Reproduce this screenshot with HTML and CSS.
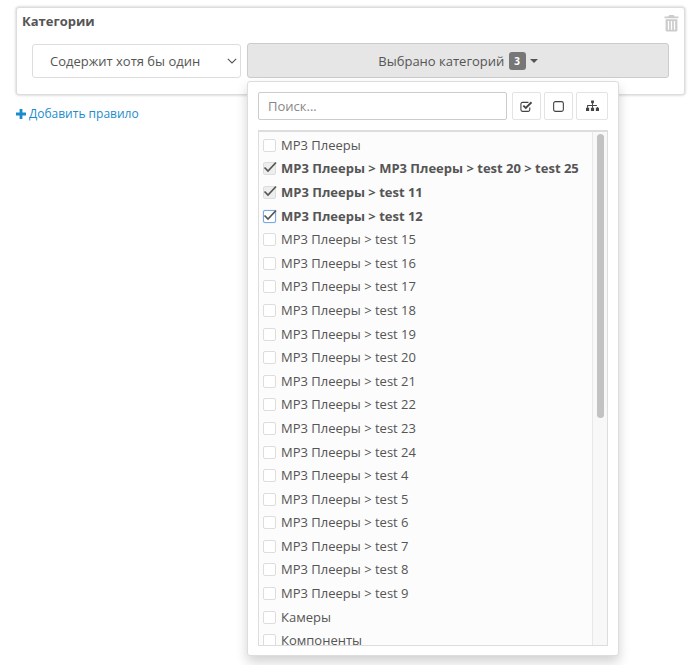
FILE: index.html
```html
<!DOCTYPE html>
<html lang="ru">
<head>
  <meta charset="UTF-8" />
  <title>Категории</title>
  <link rel="stylesheet" href="styles.css">
</head>
<body>
  <section class="rule">
    <svg class="trash" viewBox="0 0 14 16" width="15" height="18"><path d="M5 0.5h4l1 1.5h3.5v1.6H.5V2H4zM1.5 4.6h11V15a1 1 0 0 1-1 1h-9a1 1 0 0 1-1-1zM3.6 6.2v8h1.2v-8zM6.4 6.2v8h1.2v-8zM9.2 6.2v8h1.2v-8z" fill-rule="evenodd"/></svg>
    <h2 class="rule-title">Категории</h2>
    <div class="rule-controls">
      <div class="select">
        <span>Содержит хотя бы один</span>
        <svg class="select-arrow" viewBox="0 0 10 6" width="10" height="6"><path d="M.8.8 5 5l4.2-4.2" fill="none" stroke="#555" stroke-width="1.1"/></svg>
      </div>
      <div class="picker">
        <button class="picker-btn" type="button">Выбрано категорий <span class="badge">3</span><span class="caret"></span></button>
        <div class="dropdown">
          <div class="toolbar">
            <input class="search" type="text" placeholder="Поиск..." />
            <button class="tool tool-check" type="button">
              <svg viewBox="0 0 14 14" width="13" height="13"><path d="M10.5 8v2.6a1.6 1.6 0 0 1-1.6 1.6H2.6A1.6 1.6 0 0 1 1 10.6V4.2a1.6 1.6 0 0 1 1.6-1.6h6.5" fill="none" stroke="#444" stroke-width="1.2"/><path d="M3.6 6 6.2 8.5 12.4 2.4" fill="none" stroke="#444" stroke-width="2"/></svg>
            </button>
            <button class="tool tool-empty" type="button">
              <svg viewBox="0 0 12 12" width="11" height="11"><rect x=".7" y=".7" width="10.6" height="10.6" rx="2" fill="none" stroke="#444" stroke-width="1.2"/></svg>
            </button>
            <button class="tool tool-tree" type="button">
              <svg viewBox="0 0 14 12" width="13" height="12"><path d="M5.5 0h3v3h-1v2h4.2v2h1.1v1H14v3.4h-3.4V8h1.1V6H7.5v2h1.2v3.4H5.3V8h1.2V6H2.3v2h1.1v3.4H0V8h1.2V5h5.3V3h-1z" fill="#444"/></svg>
            </button>
          </div>
          <div class="list">
            <ul class="items">
              <li class="item"><span class="box"></span>МР3 Плееры</li>
              <li class="item is-checked"><span class="box"><svg viewBox="0 0 14 12" width="14" height="12"><path d="M1.5 6.5 5 10l8-8.5" fill="none" stroke="#555" stroke-width="1.7"/></svg></span>МР3 Плееры &gt; МР3 Плееры &gt; test 20 &gt; test 25</li>
              <li class="item is-checked"><span class="box"><svg viewBox="0 0 14 12" width="14" height="12"><path d="M1.5 6.5 5 10l8-8.5" fill="none" stroke="#555" stroke-width="1.7"/></svg></span>МР3 Плееры &gt; test 11</li>
              <li class="item is-checked is-focus"><span class="box"><svg viewBox="0 0 14 12" width="14" height="12"><path d="M1.5 6.5 5 10l8-8.5" fill="none" stroke="#555" stroke-width="1.7"/></svg></span>МР3 Плееры &gt; test 12</li>
              <li class="item"><span class="box"></span>МР3 Плееры &gt; test 15</li>
              <li class="item"><span class="box"></span>МР3 Плееры &gt; test 16</li>
              <li class="item"><span class="box"></span>МР3 Плееры &gt; test 17</li>
              <li class="item"><span class="box"></span>МР3 Плееры &gt; test 18</li>
              <li class="item"><span class="box"></span>МР3 Плееры &gt; test 19</li>
              <li class="item"><span class="box"></span>МР3 Плееры &gt; test 20</li>
              <li class="item"><span class="box"></span>МР3 Плееры &gt; test 21</li>
              <li class="item"><span class="box"></span>МР3 Плееры &gt; test 22</li>
              <li class="item"><span class="box"></span>МР3 Плееры &gt; test 23</li>
              <li class="item"><span class="box"></span>МР3 Плееры &gt; test 24</li>
              <li class="item"><span class="box"></span>МР3 Плееры &gt; test 4</li>
              <li class="item"><span class="box"></span>МР3 Плееры &gt; test 5</li>
              <li class="item"><span class="box"></span>МР3 Плееры &gt; test 6</li>
              <li class="item"><span class="box"></span>МР3 Плееры &gt; test 7</li>
              <li class="item"><span class="box"></span>МР3 Плееры &gt; test 8</li>
              <li class="item"><span class="box"></span>МР3 Плееры &gt; test 9</li>
              <li class="item"><span class="box"></span>Камеры</li>
              <li class="item"><span class="box"></span>Компоненты</li>
            </ul>
            <div class="scrollbar"><div class="thumb"></div></div>
          </div>
        </div>
      </div>
    </div>
  </section>

  <a class="add-rule" href="#"><svg viewBox="0 0 10 10" width="10" height="10"><path d="M3.6 0h2.8v3.6H10v2.8H6.4V10H3.6V6.4H0V3.6h3.6z" fill="#1b8ccb"/></svg>Добавить правило</a>
</body>
</html>
```

FILE: styles.css
```css
*, *::before, *::after { box-sizing: border-box; }
html, body { height: 100%; }
body {
  margin: 0;
  padding: 7px 10px 0 16px;
  overflow: hidden;
  font-family: "Open Sans", sans-serif;
  font-size: 13px;
  color: #555;
  background: #fff;
}

/* Rule card */
.rule {
  position: relative;
  height: 88px;
  padding: 5px 15px 0 5px;
  background: #fff;
  border: 1px solid #ddd;
  border-radius: 3px;
  box-shadow: 0 0 3px rgba(0,0,0,0.25);
}
.rule-title {
  margin: 0 0 13px;
  font-size: 13px;
  line-height: 17px;
  font-weight: 700;
  color: #555;
}
.trash {
  position: absolute;
  top: 6px;
  right: 5px;
  fill: #ccc;
}
.rule-controls {
  display: flex;
  align-items: flex-end;
  gap: 6px;
  padding-left: 10px;
}

/* Select */
.select {
  display: flex;
  align-items: center;
  justify-content: space-between;
  width: 209px;
  height: 34px;
  padding: 0 3px 0 17px;
  color: #555;
  border: 1px solid #ddd;
  border-radius: 3px;
}

/* Picker button and dropdown */
.picker {
  position: relative;
  flex: 1;
}
.picker-btn {
  display: block;
  width: 100%;
  height: 35px;
  padding: 0;
  font-family: inherit;
  font-size: 13px;
  color: #555;
  background: #e6e6e6;
  border: 1px solid #ccc;
  border-radius: 3px;
}
.badge {
  display: inline-block;
  width: 17px;
  height: 18px;
  margin-left: 1px;
  font-size: 10px;
  line-height: 18px;
  font-weight: 700;
  color: #fff;
  background: #777;
  border-radius: 3px;
  vertical-align: 1px;
}
.caret {
  display: inline-block;
  margin-left: 4px;
  border-top: 4px solid #555;
  border-left: 4px solid transparent;
  border-right: 4px solid transparent;
  vertical-align: 3px;
}
.dropdown {
  position: absolute;
  top: 38px;
  left: 0;
  width: 372px;
  height: 575px;
  padding: 10px 10px 0;
  background: #fff;
  border: 1px solid #ddd;
  border-radius: 3px;
  box-shadow: 0 6px 12px rgba(0,0,0,0.18);
}
.toolbar {
  display: flex;
  gap: 3px;
  height: 28px;
}
.search {
  width: 249px;
  margin-right: 2px;
  padding: 0 9px;
  font-family: inherit;
  font-size: 13px;
  color: #555;
  border: 1px solid #ccc;
  border-radius: 2px;
}
.search::placeholder { color: #888; opacity: 1; }
.tool {
  display: flex;
  align-items: center;
  justify-content: center;
  width: 29px;
  padding: 0;
  background: #fff;
  border: 1px solid #e3e3e3;
  border-radius: 2px;
}
.tool-tree { width: 32px; }

/* Category list */
.list {
  display: flex;
  height: 516px;
  margin-top: 10px;
  overflow: hidden;
  background: #fcfcfc;
  border: 1px solid #ddd;
  border-top-width: 2px;
}
.items {
  flex: 1;
  min-width: 0;
  margin: 0;
  padding: 1px 0 0 4px;
  list-style: none;
}
.item {
  display: flex;
  align-items: center;
  gap: 5px;
  height: 23.6px;
  white-space: nowrap;
  color: #555;
}
.item.is-checked { font-weight: 700; }
.box {
  position: relative;
  flex: none;
  width: 13px;
  height: 13px;
  margin-top: 1px;
  background: #fff;
  border: 1px solid #ddd;
  border-radius: 2px;
}
.box svg {
  position: absolute;
  top: -2px;
  left: -1px;
}
.is-checked .box { background: #eee; }
.is-focus .box {
  background: #fff;
  border-color: #7aa8e0;
  box-shadow: 0 0 1px #7aa8e0;
}
.scrollbar {
  flex: none;
  width: 15px;
  padding: 2px 3px 0 4px;
  background: #f8f8f8;
  border-left: 1px solid #e8e8e8;
}
.thumb {
  width: 7px;
  height: 284px;
  background: #c2c2c2;
  border-radius: 4px;
}

/* Add rule link */
.add-rule {
  display: inline-flex;
  align-items: center;
  gap: 3px;
  margin-top: 10px;
  font-size: 12px;
  line-height: 18px;
  color: #1b8ccb;
  text-decoration: none;
}
```
